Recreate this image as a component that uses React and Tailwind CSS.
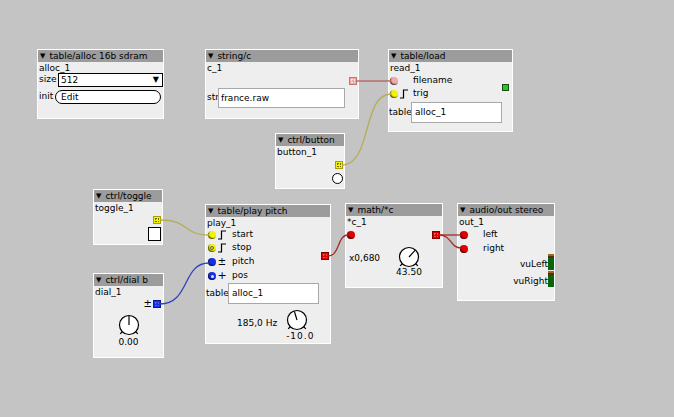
import React from "react";

function Node({ cls, title, name, children }) {
  return (
    <div className={`absolute flex flex-col overflow-hidden border border-white bg-[#eeeeee] ${cls}`}>
      <div className="flex h-[12px] shrink-0 items-center bg-[#9c9c9c] pl-[2px] leading-[12px]">
        <span className="text-[7px] leading-[12px]">▼</span>
        <span className="ml-[4px]">{title}</span>
      </div>
      <div className="h-[12px] shrink-0 pl-[1px] leading-[12px]">{name}</div>
      {children}
    </div>
  );
}

function Inlet({ color, cls = "", inner }) {
  return (
    <div className={`relative flex h-[8px] w-[8px] shrink-0 items-center justify-center rounded-full shadow-[inset_1px_-1px_1px_rgba(0,0,0,0.65)] ${color} ${cls}`}>
      {inner}
    </div>
  );
}

function Outlet({ color, dots }) {
  return (
    <div className={`flex h-[8px] w-[8px] shrink-0 items-center justify-center border ${color}`}>
      <div className={`h-[4px] w-[4px] border border-dotted ${dots}`} />
    </div>
  );
}

function Step({ cls = "" }) {
  return (
    <svg width="9" height="10" viewBox="0 0 9 10" className={`shrink-0 ${cls}`}>
      <polyline points="0,9 3.5,9 3.5,1 8,1" fill="none" stroke="#000" strokeWidth="1.2" />
    </svg>
  );
}

function Dial({ angle }) {
  const cx = 14, cy = 12, r = 9.5;
  const rad = (angle * Math.PI) / 180;
  const px = cx + 9 * Math.sin(rad);
  const py = cy - 9 * Math.cos(rad);
  const t = 0.7071;
  return (
    <svg width="28" height="24" viewBox="0 0 28 24" className="shrink-0">
      <circle cx={cx} cy={cy} r={r} fill="#fff" stroke="#000" strokeWidth="1.2" />
      <line x1={cx} y1={cy} x2={px} y2={py} stroke="#000" strokeWidth="1.2" />
      <line x1={cx - r * t} y1={cy + r * t} x2={cx - 12.5 * t} y2={cy + 12.5 * t} stroke="#000" strokeWidth="1.2" />
      <line x1={cx + r * t} y1={cy + r * t} x2={cx + 12.5 * t} y2={cy + 12.5 * t} stroke="#000" strokeWidth="1.2" />
    </svg>
  );
}

function Meter() {
  return (
    <div className="flex h-[16px] w-[6px] shrink-0 flex-col">
      <div className="h-[2px] bg-[#9a6a20]" />
      <div className="h-[2px] bg-[#5a2a10]" />
      <div className="flex-1 bg-[#0a640a]" />
    </div>
  );
}

export default function App() {
  return (
    <div className="relative h-[417px] w-[674px] overflow-hidden bg-[#c4c4c4] font-['DejaVu_Sans',sans-serif] text-[9px] text-black">
      {/* table/alloc */}
      <Node cls="left-[37px] top-[49px] h-[70px] w-[127px]" title="table/alloc 16b sdram" name="alloc_1">
        <div className="mt-[-1px] flex h-[14px] items-center">
          <span className="w-[20px] shrink-0 pl-[1px]">size</span>
          <div className="flex h-[14px] flex-1 items-center justify-between border border-black bg-white pl-[2px] pr-[3px] leading-[12px]">
            <span>512</span>
            <span className="text-[8px]">▼</span>
          </div>
        </div>
        <div className="mt-[3px] flex h-[14px] items-center">
          <span className="w-[17px] shrink-0 pl-[1px]">init</span>
          <div className="h-[14px] w-[106px] rounded-full border border-black bg-white pl-[5px] leading-[12px]">Edit</div>
        </div>
      </Node>

      {/* string/c */}
      <Node cls="left-[205px] top-[49px] h-[70px] w-[154px]" title="string/c" name="c_1">
        <div className="mt-[3px] flex justify-end pr-[1px]">
          <Outlet color="bg-[#f0a4a4] border-[#c07878]" dots="border-[#fff0f0]" />
        </div>
        <div className="mt-[3px] flex items-center">
          <span className="w-[12px] shrink-0 pl-[1px]">str</span>
          <div className="h-[20px] w-[127px] border border-[#a8a8a8] bg-white pl-[2px] leading-[18px]">france.raw</div>
        </div>
      </Node>

      {/* table/load */}
      <Node cls="left-[388px] top-[49px] h-[83px] w-[125px]" title="table/load" name="read_1">
        <div className="flex items-center">
          <div className="flex flex-1 flex-col">
            <div className="flex h-[13px] items-center">
              <Inlet color="bg-[#f0a8a8]" cls="ml-[1px]" />
              <span className="ml-[15px]">filename</span>
            </div>
            <div className="flex h-[13px] items-center">
              <Inlet color="bg-[#f4f400]" cls="ml-[1px]" />
              <Step cls="ml-[2px]" />
              <span className="ml-[4px]">trig</span>
            </div>
          </div>
          <div className="mr-[3px] h-[7px] w-[7px] border border-[#1a4a1a] bg-[#22cc22]" />
        </div>
        <div className="mt-[2px] flex items-center">
          <span className="w-[22px] shrink-0">table</span>
          <div className="h-[21px] w-[91px] border border-[#a8a8a8] bg-white pl-[3px] leading-[19px]">alloc_1</div>
        </div>
      </Node>

      {/* ctrl/button */}
      <Node cls="left-[275px] top-[133px] h-[56px] w-[70px]" title="ctrl/button" name="button_1">
        <div className="mt-[3px] flex justify-end pr-[1px]">
          <Outlet color="bg-[#f4f400] border-[#a8a000]" dots="border-[#706800]" />
        </div>
        <div className="mt-[4px] flex justify-end pr-[1px]">
          <div className="h-[11px] w-[11px] rounded-full border border-black bg-white" />
        </div>
      </Node>

      {/* ctrl/toggle */}
      <Node cls="left-[93px] top-[189px] h-[56px] w-[70px]" title="ctrl/toggle" name="toggle_1">
        <div className="mt-[2px] flex justify-end pr-[1px]">
          <Outlet color="bg-[#f4f400] border-[#a8a000]" dots="border-[#706800]" />
        </div>
        <div className="mt-[3px] flex justify-end pr-[1px]">
          <div className="h-[14px] w-[13px] border border-black bg-white" />
        </div>
      </Node>

      {/* ctrl/dial b */}
      <Node cls="left-[93px] top-[273px] h-[85px] w-[71px]" title="ctrl/dial b" name="dial_1">
        <div className="mt-[2px] flex items-center justify-end pr-[2px]">
          <span className="mr-[1px] text-[10px] leading-[8px]">±</span>
          <Outlet color="bg-[#1a2ee8] border-[#0a1890]" dots="border-[#5060ff]" />
        </div>
        <div className="mt-[5px] flex flex-col items-center">
          <Dial angle={0} />
          <span className="mt-[0px] leading-[10px]">0.00</span>
        </div>
      </Node>

      {/* table/play pitch */}
      <Node cls="left-[205px] top-[204px] h-[140px] w-[126px]" title="table/play pitch" name="play_1">
        <div className="flex items-center">
          <div className="flex flex-1 flex-col">
            <div className="flex h-[12px] items-center">
              <Inlet color="bg-[#f4f400]" cls="ml-[2px]" />
              <Step cls="ml-[2px]" />
              <span className="ml-[5px]">start</span>
            </div>
            <div className="flex h-[14px] items-center">
              <Inlet color="bg-[#f4f400]" cls="ml-[2px]" inner={<div className="h-[4px] w-[4px] rounded-full border border-[#555]" />} />
              <Step cls="ml-[2px]" />
              <span className="ml-[5px]">stop</span>
            </div>
            <div className="flex h-[14px] items-center">
              <Inlet color="bg-[#1a2ee8]" cls="ml-[2px]" />
              <span className="ml-[1px] w-[10px] text-center text-[10px] leading-[10px]">±</span>
              <span className="ml-[5px]">pitch</span>
            </div>
            <div className="flex h-[14px] items-center">
              <Inlet color="bg-[#1a2ee8]" cls="ml-[2px]" inner={<div className="h-[3px] w-[3px] rounded-full bg-[#dfe4ff]" />} />
              <span className="ml-[1px] w-[10px] text-center text-[11px] leading-[10px]">+</span>
              <span className="ml-[5px]">pos</span>
            </div>
          </div>
          <div className="mr-[1px]">
            <Outlet color="bg-[#e00000] border-[#800000]" dots="border-[#ff5050]" />
          </div>
        </div>
        <div className="flex items-center">
          <span className="w-[22px] shrink-0">table</span>
          <div className="h-[21px] w-[91px] border border-[#a8a8a8] bg-white pl-[3px] leading-[19px]">alloc_1</div>
        </div>
        <div className="mt-[4px] flex items-start">
          <span className="ml-[31px] mt-[9px] whitespace-nowrap leading-[12px]">185,0 Hz</span>
          <div className="ml-[6px] flex flex-col items-start">
            <Dial angle={-17} />
            <span className="ml-[3px] mt-[-1px] w-[29px] overflow-hidden whitespace-nowrap leading-[10px] tracking-[1px]">-10.00</span>
          </div>
        </div>
      </Node>

      {/* math/*c */}
      <Node cls="left-[345px] top-[203px] h-[85px] w-[98px]" title="math/*c" name="*c_1">
        <div className="flex h-[14px] items-center justify-between pr-[2px]">
          <Inlet color="bg-[#e00000]" cls="ml-[1px]" />
          <Outlet color="bg-[#e00000] border-[#800000]" dots="border-[#ff5050]" />
        </div>
        <div className="mt-[3px] flex items-start">
          <span className="ml-[3px] mt-[7px] w-[31px] whitespace-nowrap leading-[12px]">x0,680</span>
          <div className="ml-[15px] flex flex-col items-center">
            <Dial angle={42} />
            <span className="mt-[-2px] leading-[10px]">43.50</span>
          </div>
        </div>
      </Node>

      {/* audio/out stereo */}
      <Node cls="left-[457px] top-[203px] h-[98px] w-[98px]" title="audio/out stereo" name="out_1">
        <div className="flex h-[14px] items-center">
          <Inlet color="bg-[#e00000]" cls="ml-[2px]" />
          <span className="ml-[15px]">left</span>
        </div>
        <div className="flex h-[13px] items-center">
          <Inlet color="bg-[#e00000]" cls="ml-[2px]" />
          <span className="ml-[15px]">right</span>
        </div>
        <div className="mt-[-1px] flex h-[16px] items-end justify-end">
          <span className="leading-[12px]">vuLeft</span>
          <Meter />
        </div>
        <div className="mt-[1px] flex h-[16px] items-end justify-end">
          <span className="leading-[12px]">vuRight</span>
          <Meter />
        </div>
      </Node>

      {/* wires */}
      <svg className="pointer-events-none absolute left-0 top-0" width="674" height="417" viewBox="0 0 674 417">
        <g fill="none" strokeWidth="1.3">
          <path d="M356,81 L391,81" stroke="#b86a6a" />
          <path d="M342,165 C372,165 362,94 391,94" stroke="#b4ac58" />
          <path d="M160,220 C190,220 182,235 209,235" stroke="#b4ac58" />
          <path d="M160,304 C190,304 182,263 209,263" stroke="#3040c0" />
          <path d="M328,256 C340,256 337,235 348,235" stroke="#a82828" />
          <path d="M439,235 L461,235" stroke="#a82828" />
          <path d="M439,235 C452,235 450,248 461,248" stroke="#a82828" />
        </g>
      </svg>
    </div>
  );
}
